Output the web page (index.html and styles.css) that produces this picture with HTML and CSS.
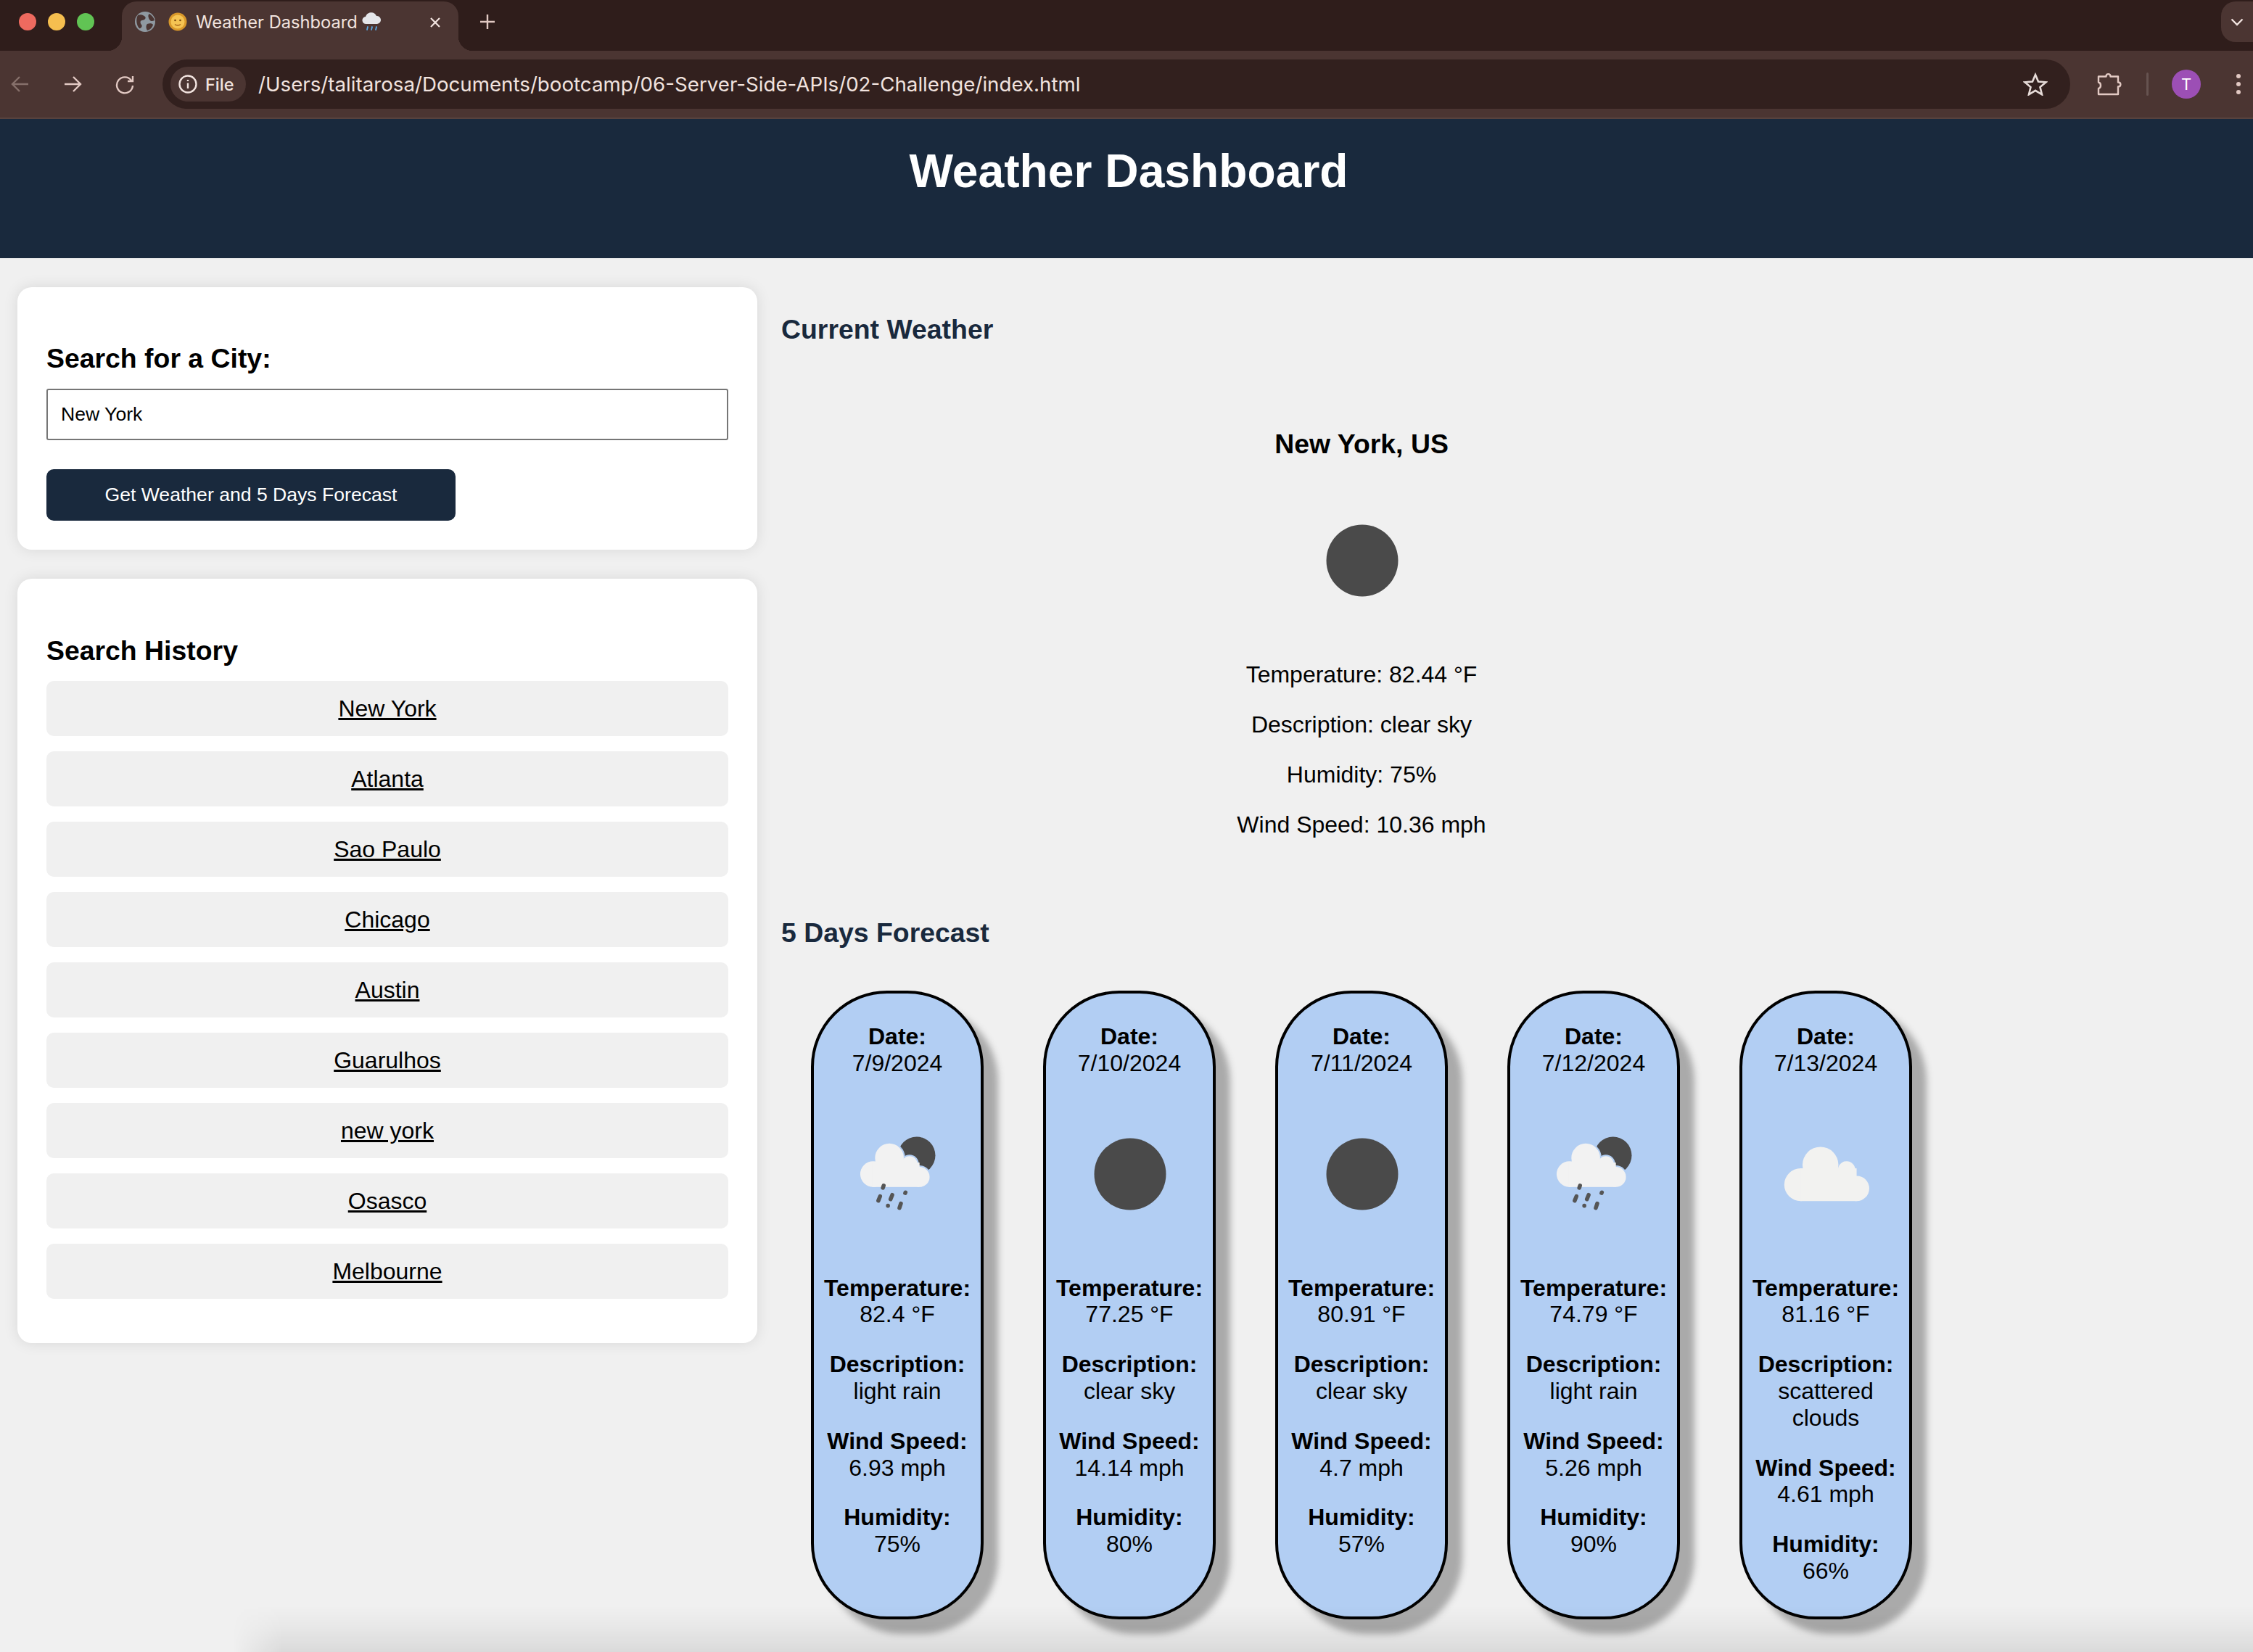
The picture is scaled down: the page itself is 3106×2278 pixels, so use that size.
FILE: index.html
```html
<!DOCTYPE html>
<html lang="en">
<head>
<meta charset="UTF-8">
<title>Weather Dashboard</title>
<link rel="stylesheet" href="styles.css">
</head>
<body>
<svg class="defs" width="0" height="0">
  <symbol id="sun" viewBox="0 0 100 100">
    <circle cx="50" cy="50" r="25" fill="#4a4a4a"/>
  </symbol>
  <symbol id="rain" viewBox="0 0 100 100">
    <circle cx="63" cy="37" r="13" fill="#4a4a4a"/>
    <g fill="#b2cef3" stroke="#b2cef3" stroke-width="2">
      <circle cx="44" cy="38.7" r="10"/>
      <circle cx="58" cy="43" r="5.5"/>
      <circle cx="65" cy="52" r="7"/>
    </g>
    <g fill="#f2f2f2">
      <circle cx="44" cy="38.7" r="10"/>
      <circle cx="32.7" cy="50" r="9"/>
      <circle cx="58" cy="43" r="5.5"/>
      <circle cx="65" cy="52" r="7"/>
      <rect x="32" y="42" width="33" height="17"/>
    </g>
    <g stroke="#555" stroke-width="2.8" stroke-linecap="round">
      <path d="M40 58 39.500 59.500"/>
      <path d="M37.500 65.500 36.300 68.500"/>
      <path d="M46 64.500 44.800 67.500"/>
      <path d="M55.200 62.800 55 63.200"/>
      <path d="M43 72 43 72.100"/>
      <path d="M52 70.500 51 73.500"/>
    </g>
  </symbol>
  <symbol id="clouds" viewBox="0 0 100 100">
    <g fill="#f2f2f0">
      <circle cx="32" cy="57.400" r="11.400"/>
      <circle cx="45.800" cy="43.500" r="12.500"/>
      <circle cx="64" cy="47" r="6"/>
      <circle cx="71" cy="60" r="8.800"/>
      <rect x="32" y="46" width="39" height="22.800"/>
    </g>
  </symbol>
</svg>

<div class="tabstrip">
  <div class="lights"><i class="red"></i><i class="yellow"></i><i class="green"></i></div>
  <div class="tab">
    <svg class="globe" width="28" height="28" viewBox="0 0 28 28">
      <circle cx="14" cy="14" r="14" fill="#8f99a1"/>
      <path d="M4 5c5-2 8 0 10 2s-1 5-4 5-3 4-1 6-1 6-3 5C2 19 1 10 4 5zM20 3c3 2 6 5 7 9-3 2-6 1-7-1s-3-6 0-8zM17 17c3-1 7-1 8 1-1 4-4 7-8 8-2-3-2-7 0-9z" fill="#4b3532"/>
    </svg>
    <svg class="emoji" width="26" height="30" viewBox="0 0 26 30">
      <circle cx="13" cy="15" r="12.500" fill="#d9982a"/>
      <circle cx="13" cy="15" r="9.500" fill="#f5c453"/>
      <circle cx="9.500" cy="13" r="1.300" fill="#7a4a10"/>
      <circle cx="16.500" cy="13" r="1.300" fill="#7a4a10"/>
      <path d="M9 18.500c2 2 6 2 8 0" fill="none" stroke="#a8661a" stroke-width="1.300"/>
    </svg>
    <span class="tab-title">Weather Dashboard</span>
    <svg class="emoji" width="26" height="32" viewBox="0 0 26 32">
      <path d="M6 19a5 5 0 0 1-1-10 8 8 0 0 1 15-1 5.500 5.500 0 0 1 1 11z" fill="#e4e6ea"/>
      <g stroke="#5aa9e6" stroke-width="1.800" stroke-linecap="round">
        <path d="M8 23 7 27"/><path d="M14 23 13 27"/><path d="M20 23 19 27"/>
      </g>
    </svg>
    <svg class="tab-close" width="16" height="16" viewBox="0 0 16 16"><path d="M2 2 14 14M14 2 2 14" stroke="#f1e3df" stroke-width="2.200"/></svg>
  </div>
  <svg class="newtab" width="22" height="22" viewBox="0 0 22 22"><path d="M11 1V21M1 11H21" stroke="#e2c9c3" stroke-width="2.400"/></svg>
  <div class="tabsearch">
    <svg width="18" height="11" viewBox="0 0 18 11"><path d="M1.500 1.500 9 9l7.500-7.500" fill="none" stroke="#f1e3df" stroke-width="2.400"/></svg>
  </div>
</div>

<div class="toolbar">
  <svg class="nav first" width="28" height="28" viewBox="0 0 28 28"><path d="M25 14H4M13 4 3 14l10 10" fill="none" stroke="#86706b" stroke-width="2.400"/></svg>
  <svg class="nav" width="28" height="28" viewBox="0 0 28 28"><path d="M3 14H24M15 4l10 10-10 10" fill="none" stroke="#e2c9c3" stroke-width="2.400"/></svg>
  <svg class="nav" width="28" height="28" viewBox="0 0 28 28"><path d="M23 9A11 11 0 1 0 25 16M25 3V10H18" fill="none" stroke="#e2c9c3" stroke-width="2.400"/></svg>
  <div class="omnibox">
    <div class="chip">
      <svg width="28" height="28" viewBox="0 0 28 28"><circle cx="14" cy="14" r="11.500" fill="none" stroke="#f1e3df" stroke-width="2.400"/><path d="M14 12.500V20M14 8V10" stroke="#f1e3df" stroke-width="2.400"/></svg>
      <span>File</span>
    </div>
    <span class="url">/Users/talitarosa/Documents/bootcamp/06-Server-Side-APIs/02-Challenge/index.html</span>
    <svg class="star" width="34" height="32" viewBox="0 0 34 32"><path d="M17 3l4 9.500 10.500.8-8 6.800 2.500 10.200L17 24.800 8 30.300l2.500-10.200-8-6.800L13 12.500z" fill="none" stroke="#e6dbd8" stroke-width="2.600"/></svg>
  </div>
  <svg class="puzzle" width="34" height="34" viewBox="0 0 34 34"><path d="M2 6.500H12.500C12.500 2 18.500 2 18.500 6.500H29V14.500C33.500 14.500 33.500 20.500 29 20.500V31H2V23C6 22 6 15.500 2 14.500z" fill="none" stroke="#e2c9c3" stroke-width="2.400" stroke-linejoin="round"/></svg>
  <div class="divider"></div>
  <div class="avatar">T</div>
  <div class="menu"><i></i><i></i><i></i></div>
</div>

<header class="page-head">
  <h1>Weather Dashboard</h1>
</header>

<main class="layout">
  <aside class="sidebar">
    <section class="panel">
      <h3>Search for a City:</h3>
      <input class="city-input" type="text" value="New York">
      <button class="search-btn" type="button">Get Weather and 5 Days Forecast</button>
    </section>
    <section class="panel history">
      <h3>Search History</h3>
      <a class="history-item" href="#">New York</a>
      <a class="history-item" href="#">Atlanta</a>
      <a class="history-item" href="#">Sao Paulo</a>
      <a class="history-item" href="#">Chicago</a>
      <a class="history-item" href="#">Austin</a>
      <a class="history-item" href="#">Guarulhos</a>
      <a class="history-item" href="#">new york</a>
      <a class="history-item" href="#">Osasco</a>
      <a class="history-item" href="#">Melbourne</a>
    </section>
  </aside>

  <div class="results">
    <h3 class="section-title">Current Weather</h3>
    <div class="current">
      <h3>New York, US</h3>
      <svg class="current-icon"><use href="#sun"/></svg>
      <p>Temperature: 82.44 °F</p>
      <p>Description: clear sky</p>
      <p>Humidity: 75%</p>
      <p>Wind Speed: 10.36 mph</p>
    </div>
    <h3 class="section-title forecast-title">5 Days Forecast</h3>
    <div class="forecast">
      <div class="day">
        <p><strong>Date:</strong><br>7/9/2024</p>
        <svg class="day-icon"><use href="#rain"/></svg>
        <p><strong>Temperature:</strong><br>82.4 °F</p>
        <p><strong>Description:</strong><br>light rain</p>
        <p><strong>Wind Speed:</strong><br>6.93 mph</p>
        <p><strong>Humidity:</strong><br>75%</p>
      </div>
      <div class="day">
        <p><strong>Date:</strong><br>7/10/2024</p>
        <svg class="day-icon"><use href="#sun"/></svg>
        <p><strong>Temperature:</strong><br>77.25 °F</p>
        <p><strong>Description:</strong><br>clear sky</p>
        <p><strong>Wind Speed:</strong><br>14.14 mph</p>
        <p><strong>Humidity:</strong><br>80%</p>
      </div>
      <div class="day">
        <p><strong>Date:</strong><br>7/11/2024</p>
        <svg class="day-icon"><use href="#sun"/></svg>
        <p><strong>Temperature:</strong><br>80.91 °F</p>
        <p><strong>Description:</strong><br>clear sky</p>
        <p><strong>Wind Speed:</strong><br>4.7 mph</p>
        <p><strong>Humidity:</strong><br>57%</p>
      </div>
      <div class="day">
        <p><strong>Date:</strong><br>7/12/2024</p>
        <svg class="day-icon"><use href="#rain"/></svg>
        <p><strong>Temperature:</strong><br>74.79 °F</p>
        <p><strong>Description:</strong><br>light rain</p>
        <p><strong>Wind Speed:</strong><br>5.26 mph</p>
        <p><strong>Humidity:</strong><br>90%</p>
      </div>
      <div class="day">
        <p><strong>Date:</strong><br>7/13/2024</p>
        <svg class="day-icon"><use href="#clouds"/></svg>
        <p><strong>Temperature:</strong><br>81.16 °F</p>
        <p><strong>Description:</strong><br>scattered clouds</p>
        <p><strong>Wind Speed:</strong><br>4.61 mph</p>
        <p><strong>Humidity:</strong><br>66%</p>
      </div>
    </div>
  </div>
</main>
<div class="window-shade"></div>
</body>
</html>
```

FILE: styles.css
```css
html,body{margin:0;padding:0;height:100%;overflow:hidden;}
body{position:relative;background:#f0f0f0;color:#000;font:32px "Liberation Sans",Arial,sans-serif;}
h1,h3,p{margin:0;}
.defs{position:absolute;}

/* browser chrome */
.tabstrip{display:flex;align-items:flex-start;height:70px;background:#2f1d1b;}
.lights{display:flex;gap:16px;padding:18px 0 0 26px;width:142px;box-sizing:border-box;}
.lights i{display:block;width:24px;height:24px;border-radius:50%;}
.lights .red{background:#ee6a5f;}
.lights .yellow{background:#f5be4f;}
.lights .green{background:#61c454;}
.tab{position:relative;display:flex;align-items:center;width:464px;height:68px;margin:2px 0 0 26px;padding:0 0 12px 18px;box-sizing:border-box;background:#4b3532;border-radius:20px 20px 0 0;color:#f1e3df;font:23.7px Inter,"Liberation Sans",sans-serif;}
.tab::before,.tab::after{content:"";position:absolute;bottom:0;width:20px;height:20px;}
.tab::before{left:-20px;background:radial-gradient(circle at 0 0,#2f1d1b 20px,#4b3532 20.5px);}
.tab::after{right:-20px;background:radial-gradient(circle at 100% 0,#2f1d1b 20px,#4b3532 20.5px);}
.globe{margin-right:18px;}
.emoji{flex:none;}
.tab-title{margin:0 6px 0 12px;white-space:nowrap;}
.tab-close{position:absolute;right:24px;top:21px;}
.newtab{margin:19px 0 0 29px;}
.tabsearch{display:flex;align-items:center;justify-content:center;width:44px;height:56px;margin:2px 0 0 auto;background:#4b3532;border-radius:20px 0 0 20px;}

.toolbar{display:flex;align-items:center;height:92px;background:#4b3532;border-bottom:2px solid #57423e;}
.nav{margin-left:44px;}
.nav.first{margin-left:14px;}
.omnibox{display:flex;align-items:center;width:2630px;height:68px;margin-left:38px;padding-left:11px;box-sizing:border-box;background:#32201e;border-radius:34px;color:#f1e3df;font:27.7px Inter,"Liberation Sans",sans-serif;}
.chip{display:flex;align-items:center;gap:10px;width:104px;height:48px;padding-left:10px;box-sizing:border-box;background:#4b3532;border-radius:24px;font-size:23.5px;font-weight:500;}
.url{margin-left:17px;white-space:nowrap;}
.star{margin-left:auto;margin-right:31px;}
.puzzle{margin-left:37px;}
.divider{width:3px;height:32px;margin-left:34px;background:#665350;border-radius:2px;}
.avatar{width:40px;height:40px;margin-left:32px;background:#9c4fb5;border-radius:50%;color:#fff;font:22px/40px Inter,"Liberation Sans",sans-serif;text-align:center;}
.menu{display:flex;flex-direction:column;gap:5px;margin-left:49px;}
.menu i{display:block;width:6px;height:6px;background:#e2c9c3;border-radius:50%;}

/* page */
.page-head{height:192px;padding:36px 0 0 6px;box-sizing:border-box;background:#19293d;color:#fff;text-align:center;}
.page-head h1{font-size:64.2px;line-height:73px;}
.layout{display:flex;align-items:flex-start;height:1922px;box-sizing:border-box;padding:40px 0 0 24px;}
.sidebar{flex:none;width:1020px;}
.panel{padding:77px 40px 40px;margin-bottom:40px;background:#fff;border-radius:20px;box-shadow:0 0 20px rgba(0,0,0,.1);}
.panel h3{font-size:37.4px;line-height:43px;}
.city-input{display:block;width:100%;height:71px;margin-top:20px;padding:0 18px;box-sizing:border-box;border:2px solid #767676;border-radius:3px;background:#fff;color:#000;font:26.6px "Liberation Sans",Arial,sans-serif;outline:none;}
.search-btn{display:block;width:564px;height:71px;margin-top:40px;padding:0;border:0;border-radius:10px;background:#19293d;color:#fff;font:26.6px "Liberation Sans",Arial,sans-serif;}
.history{padding-top:78px;}
.history h3{margin-bottom:20px;}
.history-item{display:block;height:76px;margin-bottom:21px;background:#f0f0f0;border-radius:10px;color:#000;line-height:76px;text-align:center;}

.results{flex:none;width:1600px;margin-left:33px;padding-top:37px;}
.section-title{color:#19293d;font-size:37.4px;line-height:43px;}
.current{padding-top:115px;text-align:center;}
.current h3{font-size:37.4px;line-height:43px;}
.current-icon{display:block;width:198px;height:198px;margin:40px auto;transform:translateX(1px);}
.current p{line-height:37px;margin-bottom:32px;}
.forecast-title{margin-top:109px;}
.forecast{display:flex;margin-top:58px;}
.day{width:238px;flex:none;margin:0 41px;padding:41px 10px 12px;box-sizing:border-box;border:4px solid #000;border-radius:105px;background:#b2cef3;box-shadow:20px 20px 10px #aaa;text-align:center;line-height:36.8px;}
.day p{margin-bottom:32px;}
.day-icon{display:block;width:198px;height:198px;margin:35px auto 40px;transform:translateX(1px);}

/* shadow of another window along the bottom edge */
.window-shade{position:absolute;left:320px;right:0;bottom:0;height:64px;background:linear-gradient(rgba(0,0,0,0),rgba(0,0,0,.03) 45%,rgba(0,0,0,.09));-webkit-mask-image:linear-gradient(90deg,transparent,#000 70px);mask-image:linear-gradient(90deg,transparent,#000 70px);pointer-events:none;}
```
